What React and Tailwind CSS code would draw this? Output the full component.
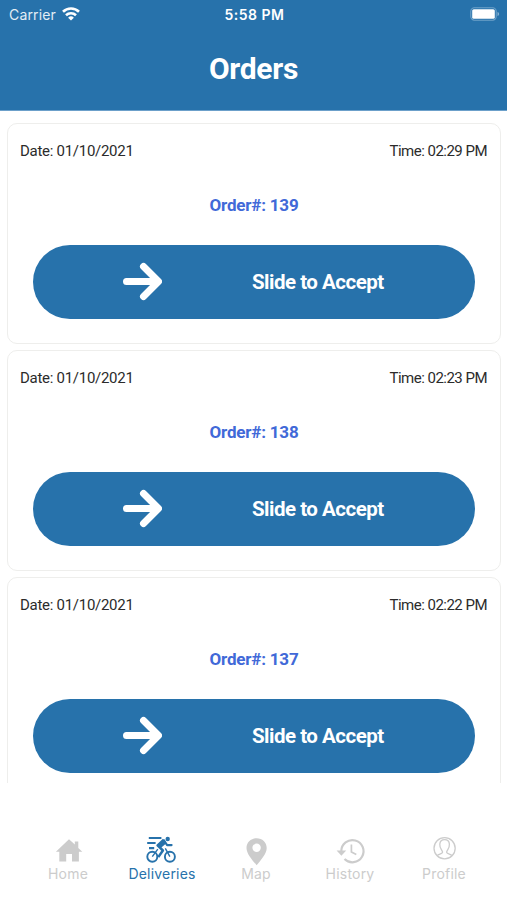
const orders = [
  { id: 139, date: '01/10/2021', time: '02:29 PM' },
  { id: 138, date: '01/10/2021', time: '02:23 PM' },
  { id: 137, date: '01/10/2021', time: '02:22 PM' },
];

function WifiIcon() {
  return (
    <svg className="h-[14px] w-[18px]" viewBox="0 0 18 14" fill="none" stroke="#fff" strokeWidth="2.6">
      <path d="M1 4.800a11.400 11.400 0 0 1 16 0" />
      <path d="M4 8.200a7.200 7.200 0 0 1 10 0" />
      <path d="M9 13.600 6.100 10.700a4.100 4.100 0 0 1 5.800 0z" fill="#fff" stroke="none" />
    </svg>
  );
}

function BatteryIcon() {
  return (
    <svg className="h-[14px] w-[30px]" viewBox="0 0 30 14">
      <rect x="0.8" y="0.8" width="25.4" height="12.4" rx="3.6" fill="none" stroke="#6fa2c9" strokeWidth="1.1" />
      <rect x="2.2" y="2.2" width="22.6" height="9.6" rx="1.6" fill="#fff" />
      <path d="M27.500 5v4c1-.3 1.600-1.100 1.600-2s-.6-1.700-1.600-2z" fill="#84b0d2" />
    </svg>
  );
}

function HomeIcon() {
  return (
    <svg className="h-8 w-8" viewBox="0 0 32 32" fill="currentColor">
      <path d="M17 4.200 22.800 9.600V6.500h3.500v6.400l4 3.800h-3.400v9.900H20v-7.500h-5.800v7.500H7.300v-9.900H3.900z" />
    </svg>
  );
}

function BikeIcon() {
  return (
    <svg className="h-8 w-8" viewBox="0 0 32 32" fill="none" stroke="currentColor">
      <circle cx="6.300" cy="21.700" r="5" strokeWidth="1.900" />
      <circle cx="23.900" cy="21.700" r="5" strokeWidth="1.900" />
      <circle cx="21.700" cy="4" r="2.200" fill="currentColor" stroke="none" />
      <path d="M2.800 3h12.600M1.200 8h8.400M3 13.100h5.200" strokeWidth="2.200" />
      <path d="M17.800 4.800 11.600 10.400l5.300 5.100-4.600 6.600" strokeWidth="2.500" strokeLinejoin="round" />
      <path d="m18 5.400 3.100 4.700h4.500" strokeWidth="2.100" strokeLinecap="round" strokeLinejoin="round" />
      <path d="m18.400 4.500-7.200 6.300 3.600 2.200 5.300-4.500z" fill="currentColor" stroke="none" />
      <path d="m19.300 13.400 4.600 8.300M11.800 14.200 6.300 21.700" strokeWidth="1.400" />
    </svg>
  );
}

function MapIcon() {
  return (
    <svg className="h-8 w-8" viewBox="0 0 32 32" fill="currentColor">
      <path
        fillRule="evenodd"
        d="M16.600 3.200c-5.700 0-10.100 4.200-10.100 9.700 0 5.700 5.400 11.500 10.100 17.300 4.700-5.800 10.100-11.600 10.100-17.300 0-5.500-4.400-9.700-10.100-9.700zm0 5.400a4.200 4.200 0 1 1 0 8.400 4.200 4.200 0 0 1 0-8.400z"
      />
    </svg>
  );
}

function HistoryIcon() {
  return (
    <svg className="h-8 w-8" viewBox="0 0 32 32" fill="none" stroke="currentColor">
      <path d="M7.300 16.300A11.100 11.100 0 1 1 10.500 24" strokeWidth="2.200" />
      <path d="M2.600 15.600h9.600l-4.800 5.200z" fill="currentColor" stroke="none" />
      <path d="M17.400 9.500v7.400l4.900 2.600" strokeWidth="1.700" />
    </svg>
  );
}

function ProfileIcon() {
  return (
    <svg className="h-8 w-8" viewBox="0 0 32 32" fill="none" stroke="currentColor" strokeWidth="1.300">
      <circle cx="16.600" cy="13.300" r="10.600" />
      <path d="M9.200 20.700c1.200-1.500 4.700-1.600 5.300-3.100.3-1-.4-1.700-1-2.700-1.200-2-1.900-3.500-1.700-5.800.2-2.600 2.200-4.400 4.800-4.400s4.600 1.800 4.800 4.400c.2 2.300-.5 3.800-1.700 5.800-.6 1-1.300 1.700-1 2.700.6 1.500 4.100 1.600 5.300 3.100" />
    </svg>
  );
}

const tabs = [
  { name: 'Home', icon: HomeIcon },
  { name: 'Deliveries', icon: BikeIcon, active: true },
  { name: 'Map', icon: MapIcon },
  { name: 'History', icon: HistoryIcon },
  { name: 'Profile', icon: ProfileIcon },
];

function OrderCard({ order }) {
  return (
    <div className="h-[221px] shrink-0 rounded-[10px] border-[1.5px] border-[#eeeeec] bg-white">
      <div className="flex justify-between px-3 pt-[17px] text-[15px] leading-5 text-[#2b2b2b]">
        <span className="tracking-[-0.28px]">Date: {order.date}</span>
        <span className="mr-px tracking-[-0.52px]">Time: {order.time}</span>
      </div>
      <p className="mt-8 text-center text-[17px] leading-6 font-bold tracking-[-0.2px] text-[#4169d8]">
        Order#: {order.id}
      </p>
      <button className="mt-7 ml-[25px] flex h-[74px] w-[442px] items-center rounded-full bg-[#2772ab] text-white">
        <svg className="ml-[89px] h-10 w-10" viewBox="0 0 40 40" fill="none" stroke="#fff" strokeWidth="7" strokeLinecap="round" strokeLinejoin="round">
          <path d="M4.500 19.500H36M21.500 4.500l15 15-15 15" />
        </svg>
        <span className="ml-[90px] pt-px text-[20.5px] font-bold tracking-[-0.5px] whitespace-nowrap">
          Slide to Accept
        </span>
      </button>
    </div>
  );
}

export default function App() {
  return (
    <div className="flex h-[900px] w-[507px] flex-col overflow-hidden bg-white font-['Roboto',sans-serif]">
      {/* Header */}
      <header className="h-[111px] shrink-0 border-b border-[#6ca0ca] bg-[#2772ab] text-white">
        <div className="grid h-7 grid-cols-3 items-center pr-[7px] pl-[9px] font-['Inter',sans-serif] text-[14px]">
          <div className="flex items-center gap-[6px] text-[#e3edf5]">
            <span className="tracking-[0.15px]">Carrier</span>
            <WifiIcon />
          </div>
          <span className="text-center font-semibold tracking-[0.5px] whitespace-nowrap">5:58 PM</span>
          <div className="flex justify-end pb-px">
            <BatteryIcon />
          </div>
        </div>
        <h1 className="mt-[22px] text-center text-[30px] leading-[38px] font-bold tracking-[-0.3px]">Orders</h1>
      </header>

      {/* Orders */}
      <main className="flex h-[672px] shrink-0 flex-col gap-[6px] overflow-hidden pt-3 pr-[6px] pl-[7px]">
        {orders.map((order) => (
          <OrderCard key={order.id} order={order} />
        ))}
      </main>

      {/* Tab Bar */}
      <nav className="mt-[52px] ml-[21px] grid w-[470px] grid-cols-5 font-['Inter',sans-serif] text-[14px] leading-4">
        {tabs.map((tab) => {
          const Icon = tab.icon;
          return (
            <div
              key={tab.name}
              className={`flex flex-col items-center ${tab.active ? 'text-[#2772ab]' : 'text-[#cccccc]'}`}
            >
              <Icon />
              <span className="-mt-px tracking-[0.2px]">{tab.name}</span>
            </div>
          );
        })}
      </nav>
    </div>
  );
}
